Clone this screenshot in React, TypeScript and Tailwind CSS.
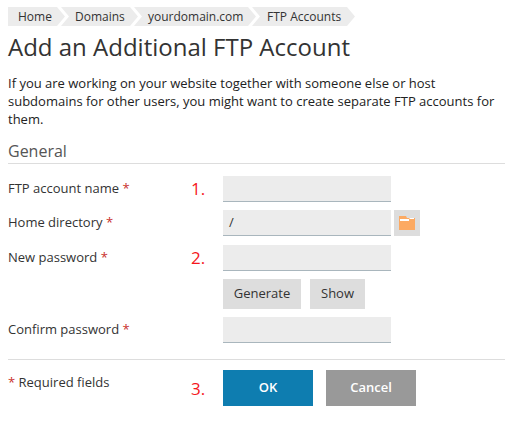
const crumbs = [
  { label: "Home", cls: "w-[57px] pl-[10px] [clip-path:polygon(0_0,calc(100%-8px)_0,100%_50%,calc(100%-8px)_100%,0_100%)]" },
  { label: "Domains", cls: "w-[77px] -ml-[4px] pl-[14px] [clip-path:polygon(0_0,calc(100%-8px)_0,100%_50%,calc(100%-8px)_100%,0_100%,8px_50%)]" },
  { label: "yourdomain.com", cls: "w-[122px] -ml-[4px] pl-[14px] [clip-path:polygon(0_0,calc(100%-8px)_0,100%_50%,calc(100%-8px)_100%,0_100%,8px_50%)]" },
  { label: "FTP Accounts", cls: "w-[103px] -ml-[4px] pl-[15px] [clip-path:polygon(0_0,calc(100%-8px)_0,100%_50%,calc(100%-8px)_100%,0_100%,8px_50%)]" },
];

function Req() {
  return <span className="text-[#c9302c]">*</span>;
}

function Row({ label, mark, value, className, children }: { label: string; mark?: string; value?: string; className?: string; children?: React.ReactNode }) {
  return (
    <div className={`flex items-center h-[26px] ${className ?? ""}`}>
      <div className="w-[183px] text-[13px]">{label} <Req /></div>
      <div className="w-[32px] text-[17px] leading-[24px] text-[#f5161c]">{mark}</div>
      <div className="w-[168px] h-[26px] bg-[#ececec] border-b border-[#a9b6bd] px-[6px] text-[13px] leading-[25px]">{value}</div>
      {children}
    </div>
  );
}

export default function App() {
  return (
    <div className="w-[510px] h-[423px] bg-white px-[8px] pt-[7px] text-[#333333] overflow-hidden font-['Open_Sans',sans-serif]">
      <div className="flex h-[19px]">
        {crumbs.map((c) => (
          <div key={c.label} className={`h-[19px] bg-[#ececec] text-[12px] leading-[19px] ${c.cls}`}>{c.label}</div>
        ))}
      </div>
      <h1 className="text-[24px] leading-[32px] mt-[5px]">Add an Additional FTP Account</h1>
      <p className="text-[13px] leading-[18px] mt-[11px] text-[#222]">
        If you are working on your website together with someone else or host subdomains for other users, you might want to create separate FTP accounts for them.
      </p>
      <div className="mt-[12px] border-b border-[#dddddd] w-[497px] h-[24px] text-[16px] leading-[22px] text-[#555]">General</div>

      <Row label="FTP account name" mark="1." className="mt-[12px]" />
      <Row label="Home directory" value="/" className="mt-[8px]">
        <div className="ml-[3px] w-[26px] h-[26px] bg-[#dddddd] flex items-center justify-center">
          <svg width="16" height="14" viewBox="0 0 16 14">
            <path d="M0 0h7l1 2h8v12H0z" fill="#fcaa63" />
            <path d="M1 3h9l1-1h4v1h-5v2H1z" fill="#ffffff" />
          </svg>
        </div>
      </Row>
      <Row label="New password" mark="2." className="mt-[9px]" />
      <div className="flex gap-[9px] ml-[215px] mt-[8px]">
        <button className="w-[78px] h-[30px] bg-[#dddddd] text-[13px]">Generate</button>
        <button className="w-[55px] h-[30px] bg-[#dddddd] text-[13px]">Show</button>
      </div>
      <Row label="Confirm password" className="mt-[8px]" />

      <div className="border-t border-[#dddddd] w-[497px] mt-[16px] pt-[10px] flex">
        <div className="w-[183px] text-[13px] leading-[24px]"><Req /> Required fields</div>
        <div className="w-[32px] text-[17px] text-[#f5161c] leading-[38px]">3.</div>
        <button className="w-[90px] h-[36px] bg-[#0e7db0] text-white text-[13px] font-semibold">OK</button>
        <button className="w-[90px] h-[36px] ml-[13px] bg-[#999999] text-white text-[13px] font-semibold">Cancel</button>
      </div>
    </div>
  );
}
